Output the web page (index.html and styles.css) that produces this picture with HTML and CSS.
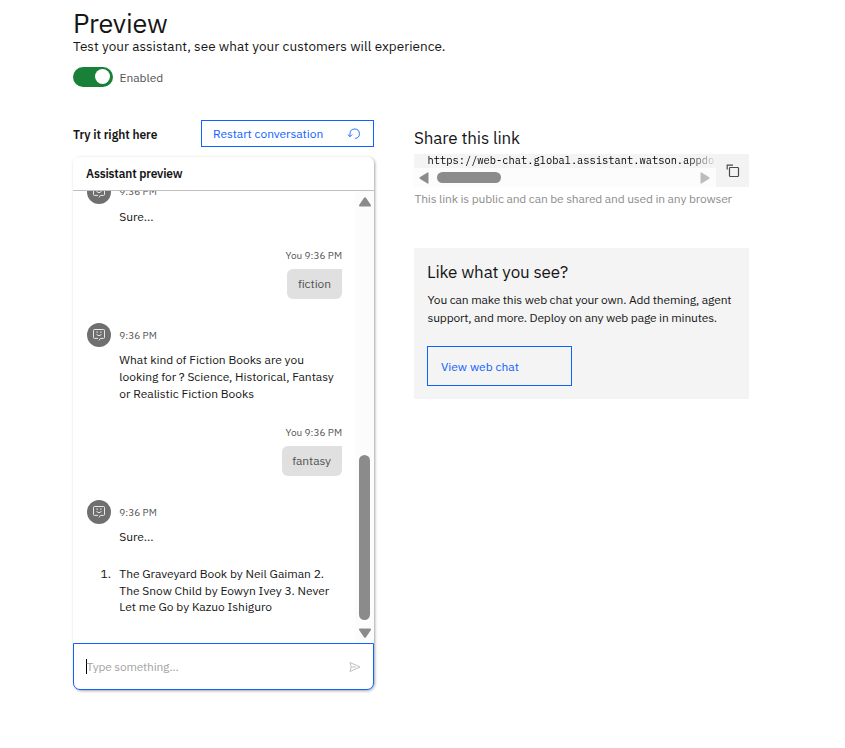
FILE: index.html
```html
<!DOCTYPE html>
<html lang="en">
<head>
<meta charset="utf-8">
<title>Preview</title>
<link rel="stylesheet" href="styles.css">
</head>
<body>
<main class="page">
  <header class="page-header">
    <h1 class="title">Preview</h1>
    <p class="subtitle">Test your assistant, see what your customers will experience.</p>
    <div class="toggle-row"><span class="toggle"></span><span class="toggle-label">Enabled</span></div>
  </header>
  <div class="columns">
    <section class="try">
      <div class="try-head">
        <h2 class="try-title">Try it right here</h2>
        <button class="restart"><span>Restart conversation</span>
          <svg width="14" height="14" viewBox="0 0 14 14" fill="none" stroke="currentColor" stroke-width=".9"><path d="M3 9.500V6.500a4.700 4.700 0 1 1 5.200 4.900M.8 7.500l2.200 2.200 2.200-2.200"/></svg>
        </button>
      </div>
      <div class="chat">
        <div class="chat-head">Assistant preview</div>
        <div class="chat-body">
          <div class="messages">
            <div class="bot-head"><svg class="avatar" viewBox="0 0 24 24"><use href="#bot"/></svg><span class="time">9:36 PM</span></div>
            <p class="bot-text">Sure...</p>
            <div class="user-meta">You 9:36 PM</div>
            <div class="bubble">fiction</div>
            <div class="bot-head"><svg class="avatar" viewBox="0 0 24 24"><use href="#bot"/></svg><span class="time">9:36 PM</span></div>
            <p class="bot-text">What kind of Fiction Books are you<br>looking for ? Science, Historical, Fantasy<br>or Realistic Fiction Books</p>
            <div class="user-meta">You 9:36 PM</div>
            <div class="bubble">fantasy</div>
            <div class="bot-head"><svg class="avatar" viewBox="0 0 24 24"><use href="#bot"/></svg><span class="time">9:36 PM</span></div>
            <p class="bot-text">Sure...</p>
            <ol class="bot-list"><li>The Graveyard Book by Neil Gaiman 2.<br>The Snow Child by Eowyn Ivey 3. Never<br>Let me Go by Kazuo Ishiguro</li></ol>
          </div>
          <div class="scrollbar">
            <svg width="12" height="10" viewBox="0 0 12 10"><path d="M5 .8Q6-.4 7 .8l4.700 7Q12.500 9.500 11 9.500H1Q-.5 9.500.3 7.800Z" fill="#8b8b8b"/></svg>
            <div class="thumb"></div>
            <svg width="12" height="10" viewBox="0 0 12 10"><path d="M5 9.200Q6 10.400 7 9.200l4.700-7Q12.500.500 11 .500H1Q-.5.500.3 2.200Z" fill="#8b8b8b"/></svg>
          </div>
        </div>
        <div class="composer">
          <span class="caret"></span><span class="placeholder">Type something...</span>
          <svg width="12" height="12" viewBox="0 0 12 12" fill="none" stroke="#c1c1c1"><path d="M1 1.500 11 6 1 10.500 2.200 6ZM2.200 6H7"/></svg>
        </div>
      </div>
    </section>
    <section class="share">
      <h2 class="share-title">Share this link</h2>
      <div class="snippet">
        <div class="snippet-scroll">
          <div class="url">https://web-chat.global.assistant.watson.appdo</div>
          <div class="hbar">
            <svg width="10" height="12" viewBox="0 0 10 12"><path d="M9.500 1v10q0 1-1 .6L.8 6.800Q0 6 .8 5.200L8.500.4q1-.4 1 .6Z" fill="#8b8b8b"/></svg>
            <div class="hthumb"></div>
            <svg width="10" height="12" viewBox="0 0 10 12"><path d="M.5 1v10q0 1 1 .6L9.200 6.800Q10 6 9.200 5.200L1.500.4Q.5 0 .5 1Z" fill="#8b8b8b"/></svg>
          </div>
        </div>
        <button class="copy"><svg width="14" height="14" viewBox="0 0 14 14" fill="none" stroke="#4a4a4a" stroke-width="1.200"><rect x="3.500" y="3.500" width="9" height="9" rx=".8"/><path d="M1.200 5.500V1.200H7"/></svg></button>
      </div>
      <p class="helper">This link is public and can be shared and used in any browser</p>
      <div class="promo">
        <h2 class="promo-title">Like what you see?</h2>
        <p class="promo-text">You can make this web chat your own. Add theming, agent<br>support, and more. Deploy on any web page in minutes.</p>
        <button class="view">View web chat</button>
      </div>
    </section>
  </div>
</main>
<svg class="defs" width="0" height="0"><defs><g id="bot"><circle cx="12" cy="12" r="12" fill="#6f6f6f"/><path d="M12 17.500 13.300 15.400H16.700Q17.500 15.400 17.500 14.600V7.300Q17.500 6.500 16.700 6.500H7.300Q6.500 6.500 6.500 7.300V14.600Q6.500 15.400 7.300 15.400H11M9.500 11.500q2.500 2.500 5 0" fill="none" stroke="#e8e8e8"/><path d="M9.500 8.500h1.300v1.300H9.500ZM13.200 8.500h1.300v1.300h-1.300Z" fill="#e8e8e8"/></g></defs></svg>
</body>
</html>
```
FILE: styles.css
```css
* { box-sizing: border-box; }
body { margin: 0; background: #fff; color: #161616; font-family: "IBM Plex Sans", Roboto, "Liberation Sans", sans-serif; font-size: 12px; }
h1, h2, p, ol { margin: 0; padding: 0; font-weight: 400; }
button { font: inherit; background: none; border: 0; padding: 0; text-align: left; }
.defs { position: absolute; }
.page { width: 845px; height: 748px; padding: 7px 96px 0 73px; overflow: hidden; }
.title { font-size: 27px; line-height: 32px; letter-spacing: -.2px; }
.subtitle { font-size: 13.500px; line-height: 16px; margin-top: -1px; letter-spacing: .05px; }
.toggle-row { display: flex; align-items: center; gap: 6.500px; height: 20px; margin-top: 13px; color: #525252; letter-spacing: -.05px; }
.toggle { width: 40px; height: 20px; border-radius: 10px; background: #198038; padding: 2px 3px; display: flex; justify-content: flex-end; }
.toggle::after { content: ""; width: 15px; height: 15px; border-radius: 50%; background: #fff; }
.columns { display: flex; gap: 40px; margin-top: 33px; }
.try { width: 301px; }
.try-head { display: flex; justify-content: space-between; height: 27px; }
.try-title { font-size: 12px; font-weight: 600; line-height: 30px; letter-spacing: -.04px; }
.restart { width: 173px; border: 1px solid #0f62fe; color: #0f62fe; display: flex; align-items: center; justify-content: space-between; padding: 0 12px 0 11px; letter-spacing: -.05px; }
.chat { margin-top: 10px; height: 533px; border-radius: 6px 6px 8px 8px; box-shadow: 1px 1px 3px rgba(0,0,0,.36); display: flex; flex-direction: column; }
.chat-head { height: 34px; border-bottom: 1px solid #c0c0c0; padding-left: 13px; font-weight: 600; line-height: 34px; letter-spacing: -.16px; }
.chat-body { height: 452px; display: flex; overflow: hidden; }
.messages { width: 282px; padding: 0 13px 0 14px; margin-top: -11px; }
.bot-head { display: flex; align-items: center; gap: 8.300px; height: 24px; font-size: 10px; color: #525252; }
.bot-head:first-child .time { margin-top: -2px; }
.avatar { width: 24px; height: 24px; }
.bot-text { padding: 4px 0 0 32.300px; line-height: 17px; letter-spacing: -.02px; white-space: nowrap; }
.user-meta { margin-top: 24px; height: 14px; line-height: 14px; text-align: right; font-size: 10px; color: #525252; }
.bubble { width: fit-content; height: 30px; margin: 6px 0 24px auto; padding: 0 11px 0 10.500px; line-height: 30px; letter-spacing: -.08px; background: #e0e0e0; color: #525252; border-radius: 6px 0 6px 6px; }
.bot-list { margin-top: 21px; padding-left: 32.300px; line-height: 16.700px; letter-spacing: -.03px; white-space: nowrap; }
.bot-list li::marker { content: "1.\00a0\00a0\00a0"; }
.scrollbar { width: 19px; background: #fcfcfc; display: flex; flex-direction: column; align-items: center; padding: 6px 0 5px; }
.thumb { width: 11px; height: 165px; margin: auto 0 8px; border-radius: 6px; background: #8b8b8b; }
.composer { height: 47px; border: 1px solid #0f62fe; border-radius: 0 0 7px 7px; background: #fff; display: flex; align-items: center; padding: 0 12px 0 12px; }
.caret { width: 1px; height: 15px; background: #000; }
.placeholder { flex: none; color: #a3a3a3; margin-left: -.5px; letter-spacing: -.2px; }
.composer svg { margin-left: auto; }
.share { width: 335px; }
.share-title { font-size: 17px; line-height: 22px; padding-top: 7px; height: 34px; letter-spacing: -.12px; }
.snippet { display: flex; height: 33px; }
.snippet-scroll { width: 302px; background: #fcfcfc; }
.url { height: 14px; padding-left: 13.500px; overflow: hidden; white-space: nowrap; font: 10.400px/13px "IBM Plex Mono", "Liberation Mono", monospace; color: transparent; background: linear-gradient(90deg, #000 90%, #e4e4e4 100%) text, #f4f4f4; }
.hbar { display: flex; align-items: center; height: 19px; padding: 0 6px 0 5px; gap: 8px; }
.hbar svg:last-child { margin-left: auto; opacity: .55; }
.hthumb { width: 64px; height: 11px; border-radius: 6px; background: #8b8b8b; }
.copy { width: 33px; background: #f3f3f3; display: grid; place-items: center; }
.helper { margin-top: 4px; padding-left: .5px; line-height: 16px; color: #8d8d8d; letter-spacing: -.16px; white-space: nowrap; }
.promo { margin-top: 41px; height: 151px; background: #f4f4f4; padding: 13px; }
.promo-title { font-size: 17px; line-height: 22px; letter-spacing: -.12px; }
.promo-text { margin-top: 8px; padding-left: .5px; line-height: 18px; letter-spacing: -.16px; white-space: nowrap; }
.view { display: block; width: 145px; height: 40px; margin-top: 19px; padding-left: 13px; border: 1px solid #0f62fe; color: #0f62fe; }
```
